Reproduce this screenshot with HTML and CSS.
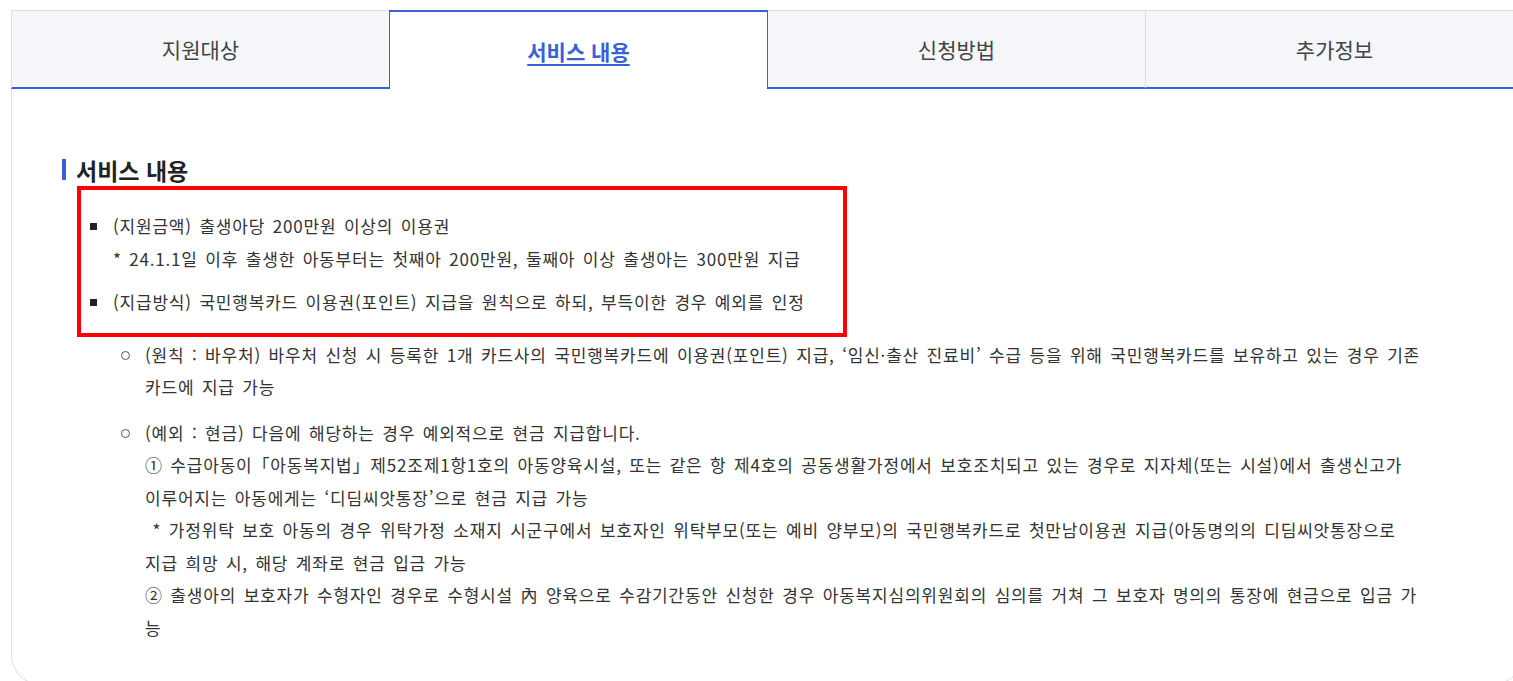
FILE: index.html
```html
<!DOCTYPE html>
<html lang="ko">
<head>
    <meta charset="UTF-8">
    <meta name="viewport" content="width=device-width, initial-scale=1.0">
    <title>서비스 내용</title>
    <link rel="stylesheet" href="styles.css">
</head>
<body>
    <div class="wrap">
        <ul class="tabs">
            <li class="tab"><a href="#">지원대상</a></li>
            <li class="tab on"><a href="#">서비스 내용</a></li>
            <li class="tab"><a href="#">신청방법</a></li>
            <li class="tab"><a href="#">추가정보</a></li>
        </ul>

        <div class="panel">
            <h3 class="tit">서비스 내용</h3>

            <div class="mark-box">
                <ul class="list-sq">
                    <li>(지원금액) 출생아당 200만원 이상의 이용권<br>
                    * 24.1.1일 이후 출생한 아동부터는 첫째아 200만원, 둘째아 이상 출생아는 300만원 지급</li>
                    <li>(지급방식) 국민행복카드 이용권(포인트) 지급을 원칙으로 하되, 부득이한 경우 예외를 인정</li>
                </ul>
            </div>

            <ul class="list-circle">
                <li>(원칙 : 바우처) 바우처 신청 시 등록한 1개 카드사의 국민행복카드에 이용권(포인트) 지급, ‘임신·출산 진료비’ 수급 등을 위해 국민행복카드를 보유하고 있는 경우 기존<br>카드에 지급 가능</li>
                <li>(예외 : 현금) 다음에 해당하는 경우 예외적으로 현금 지급합니다.<br>
                ① 수급아동이「아동복지법」제52조제1항1호의 아동양육시설, 또는 같은 항 제4호의 공동생활가정에서 보호조치되고 있는 경우로 지자체(또는 시설)에서 출생신고가<br>이루어지는 아동에게는 ‘디딤씨앗통장’으로 현금 지급 가능<br>
                &nbsp;* 가정위탁 보호 아동의 경우 위탁가정 소재지 시군구에서 보호자인 위탁부모(또는 예비 양부모)의 국민행복카드로 첫만남이용권 지급(아동명의의 디딤씨앗통장으로<br>지급 희망 시, 해당 계좌로 현금 입금 가능<br>
                ② 출생아의 보호자가 수형자인 경우로 수형시설 內 양육으로 수감기간동안 신청한 경우 아동복지심의위원회의 심의를 거쳐 그 보호자 명의의 통장에 현금으로 입금 가<br>능</li>
            </ul>
        </div>
    </div>
</body>
</html>
```

FILE: styles.css
```css
body {
    margin: 0;
    background: #fff;
    font-family: 'Noto Sans CJK KR', 'Noto Sans', sans-serif;
    color: #333;
    overflow: hidden;
}

ul {
    margin: 0;
    padding: 0;
    list-style: none;
}

.wrap {
    width: 1512px;
    padding: 10px 0 0 11px;
}

/* tabs */
.tabs {
    display: flex;
}

.tab {
    flex: 1;
    height: 76px;
    display: flex;
    align-items: center;
    justify-content: center;
    background: #f5f6fa;
    border-top: 1px solid #dcdee3;
    border-bottom: 2px solid #3a5fd8;
    border-left: 1px solid #dcdee3;
}

.tab a {
    font-size: 21px;
    color: #444;
    text-decoration: none;
}

.tab.on {
    background: #fff;
    border: 1px solid #3a5fd8;
    border-top-width: 2px;
    border-bottom: 0;
    height: 77px;
}

.tab.on + .tab {
    border-left: 0;
}

.tab.on a {
    color: #3a5fd8;
    font-weight: 700;
    text-decoration: underline;
    text-underline-offset: 4px;
}

/* panel */
.panel {
    border: 1px solid #e1e1e1;
    border-top: 0;
    border-radius: 0 0 30px 30px;
    padding: 66px 80px 40px 50px;
}

.tit {
    margin: 0;
    font-size: 23px;
    line-height: 30px;
    font-weight: 700;
    color: #222;
    padding-left: 14px;
    position: relative;
}

.tit:before {
    content: '';
    position: absolute;
    left: 0;
    top: 4px;
    width: 4px;
    height: 21px;
    background: #3a5fd8;
}

.mark-box {
    margin: 1px 0 0 15px;
    width: 762px;
    border: 4px solid #f00;
    padding: 20px 0 14px;
}

.list-sq li,
.list-circle li {
    position: relative;
    font-size: 17px;
    line-height: 32.5px;
    letter-spacing: 0.8px;
    word-spacing: 2px;
}

.list-sq li {
    padding-left: 32px;
}

.list-sq li + li {
    margin-top: 11px;
}

.list-sq li:before {
    content: '';
    position: absolute;
    left: 9px;
    top: 13px;
    width: 7px;
    height: 7px;
    background: #222;
}

.list-circle {
    width: 1340px;
    margin: 2px 0 0 83px;
}

.list-circle li + li {
    margin-top: 13px;
}

.list-circle li:before {
    content: '';
    position: absolute;
    left: -24px;
    top: 12px;
    width: 7px;
    height: 7px;
    border: 1px solid #555;
    border-radius: 50%;
}
```
